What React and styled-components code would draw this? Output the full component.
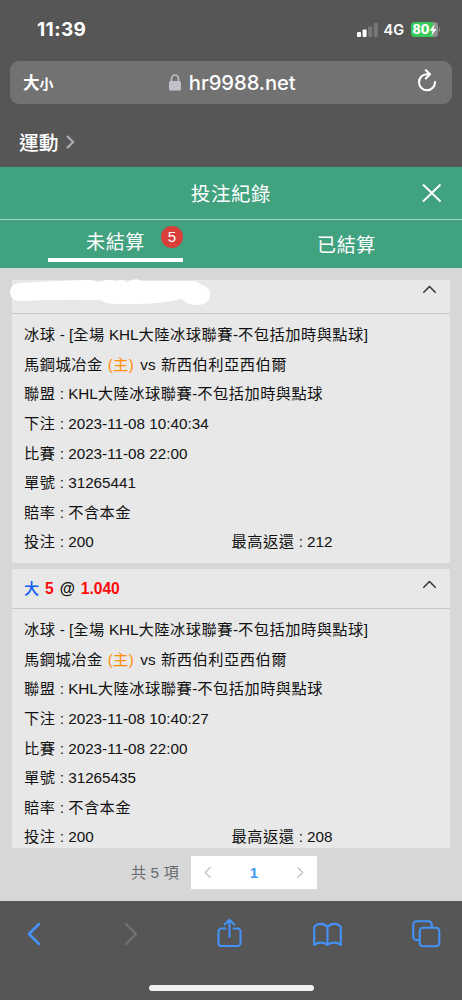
import React from "react";
import styled, { createGlobalStyle } from "styled-components";

const GlobalStyle = createGlobalStyle`
  * { box-sizing: border-box; }
  body { margin: 0; background: #565656; }
`;

const cjk = `"Noto Sans CJK TC", sans-serif`;

const Screen = styled.div`
  position: relative;
  display: flex;
  flex-direction: column;
  width: 462px;
  height: 1000px;
  overflow: hidden;
  background: #565656;
  color: #fff;
  font-family: "Liberation Sans", ${cjk};
`;

const StatusBar = styled.header`
  display: flex;
  align-items: center;
  justify-content: space-between;
  height: 61px;
  padding: 0 22px 2px 37px;
  font-family: Inter, ${cjk};
`;
const Clock = styled.span`
  font-size: 19px;
  font-weight: 700;
  letter-spacing: 0.4px;
`;
const StatusIcons = styled.div`
  display: flex;
  align-items: center;
`;
const Network = styled.span`
  margin: 0 6px 0 6px;
  width: 21px;
  font-size: 14.5px;
  font-weight: 600;
  letter-spacing: 0;
`;
const Battery = styled.div`
  display: flex;
  align-items: center;
  width: 27px;
  height: 15px;
  padding-left: 2px;
  border-radius: 4px;
  background: linear-gradient(90deg, #37c95a 80%, #929292 80%);
  font-size: 12.5px;
  font-weight: 800;
`;
const BatteryTip = styled.i`
  width: 1.5px;
  height: 5px;
  margin-left: 1px;
  border-radius: 0 2px 2px 0;
  background: #858585;
`;

const AddressBar = styled.div`
  display: grid;
  grid-template-columns: 90px 1fr 90px;
  align-items: center;
  height: 43px;
  margin: 0 10px;
  padding: 0 15.5px 0 13px;
  border-radius: 9px;
  background: #727272;
`;
const TextSize = styled.span`
  font: 600 16.5px/41px ${cjk};
  small { font-size: 14px; }
`;
const Address = styled.span`
  display: flex;
  align-items: center;
  justify-content: center;
  gap: 8px;
  padding-left: 5px;
  font: 500 20.2px/43px Inter, ${cjk};
  letter-spacing: -0.05px;
`;
const Reload = styled.span`
  display: flex;
  justify-content: flex-end;
  padding-bottom: 4px;
`;
const Crumb = styled.div`
  display: flex;
  align-items: center;
  gap: 7px;
  height: 63px;
  padding: 13px 0 0 19px;
  font: 500 19.8px/48px ${cjk};
`;

const TitleBar = styled.div`
  display: grid;
  grid-template-columns: 60px 1fr 60px;
  align-items: center;
  height: 53px;
  border-bottom: 1px solid #a9d3c4;
  background: #41a280;
`;
const Title = styled.h1`
  grid-column: 2;
  margin: 0;
  text-align: center;
  font: 400 19.5px/50px ${cjk};
  letter-spacing: 0.6px;
`;
const Close = styled.span`
  display: flex;
  justify-content: flex-end;
  padding-right: 20px;
`;
const Tabs = styled.nav`
  display: grid;
  grid-template-columns: 1fr 1fr;
  height: 48px;
  background: #41a280;
`;
const Tab = styled.div`
  position: relative;
  display: flex;
  justify-content: center;
  justify-self: center;
  width: 135px;
  height: ${(p) => (p.$active ? 42 : 48)}px;
  border-bottom: ${(p) => (p.$active ? "4px solid #fff" : "0")};
  font: 400 19px/${(p) => (p.$active ? 41 : 48)}px ${cjk};
  letter-spacing: 0.6px;
`;
const Badge = styled.b`
  position: absolute;
  top: 6px;
  right: 0;
  width: 22px;
  height: 22px;
  border-radius: 50%;
  background: #d93e38;
  font: 400 15px/22px "Liberation Sans", sans-serif;
  letter-spacing: 0;
  text-align: center;
`;

const Content = styled.main`
  display: flex;
  flex-direction: column;
  height: 633px;
  padding: 12px 12px 0;
  background: #d7d7d7;
`;
const List = styled.div`
  height: 567.5px;
  overflow: hidden;
`;
const Card = styled.section`
  height: 289px;
  margin-bottom: 6px;
  background: #e8e8e8;
  color: #111;
  &:first-child { margin-top: -6.5px; }
`;
const CardHead = styled.div`
  display: flex;
  align-items: center;
  justify-content: space-between;
  height: 40px;
  padding: 0 13px 0 12px;
  border-bottom: 1px solid #c9c9c9;
  font-size: 15.6px;
  font-weight: 700;
  svg { margin-bottom: 7px; }
`;
const Pick = styled.span`
  display: flex;
  align-items: baseline;
  gap: 5.9px;
  padding-bottom: 2px;
  font-size: 15.6px;
  em { color: #ff0a0a; font-style: normal; }
  i { color: #0a5ff0; font: 500 15.2px/30px ${cjk}; }
`;
const Details = styled.div`
  padding: 6.8px 12px 0;
`;
const Row = styled.div`
  display: grid;
  grid-template-columns: ${(p) => (p.$split ? "207.5px 1fr" : "1fr")};
  height: 29.57px;
  font-size: 15.25px;
  line-height: 29.57px;
  white-space: pre;
`;
const Han = styled.span`
  letter-spacing: 0.47px;
`;
const Home = styled.span`
  margin: 0 2px 0 1px;
  color: #ff8c0a;
`;
const Versus = styled.span`
  margin-right: 1px;
  letter-spacing: 0.15px;
`;

const Pager = styled.div`
  display: flex;
  align-items: center;
  height: 49px;
  padding-left: 119px;
  color: #66686c;
  font-size: 15.2px;
`;
const Total = styled.span`
  width: 60px;
  padding-bottom: 3px;
  white-space: nowrap;
  letter-spacing: 0.1px;
`;
const Pages = styled.div`
  display: grid;
  grid-template-columns: repeat(3, 1fr);
  align-items: center;
  justify-items: center;
  width: 126px;
  height: 33px;
  background: #fff;
  color: #3d98fa;
  font-size: 15px;
  font-weight: 700;
  svg:first-child { margin-right: 9px; }
  svg:last-child { margin-left: 8px; }
`;

const Toolbar = styled.footer`
  display: flex;
  align-items: flex-start;
  justify-content: space-between;
  height: 99px;
  padding: 16px 21px 0 20px;
  color: #4591f8;
`;
const HomeIndicator = styled.div`
  position: absolute;
  bottom: 9px;
  left: 149px;
  width: 165px;
  height: 6px;
  border-radius: 3px;
  background: #f1f1f1;
`;
const Scribble = styled.svg`
  position: absolute;
  top: 278px;
  left: 8px;
`;

/* Han characters are set slightly wider than Latin ones. */
const Mixed = ({ children }) =>
  children
    .split(/([\u3400-\u9fff]+)/)
    .map((part, i) => (i % 2 ? <Han key={i}>{part}</Han> : part));

const Stroke = ({ w, h, d, color = "currentColor", width = 2, cap = "round" }) => (
  <svg width={w} height={h} viewBox={`0 0 ${w} ${h}`} fill="none" stroke={color}
    strokeWidth={width} strokeLinecap={cap} strokeLinejoin="round">
    <path d={d} />
  </svg>
);

const Bet = ({ pick, time, id, payout }) => (
  <Card>
    <CardHead>
      <Pick>{pick}</Pick>
      <Stroke w={15} h={9} d="M1.3 7.8 7.5 1.5 13.7 7.8" color="#333" width={1.5} cap="butt" />
    </CardHead>
    <Details>
      <Row><span><Mixed>冰球 - [全場 KHL大陸冰球聯賽-不包括加時與點球]</Mixed></span></Row>
      <Row>
        <span>
          <Mixed>馬鋼城冶金 </Mixed>
          <Home><Mixed>(主)</Mixed></Home>
          <Versus> vs </Versus>
          <Mixed>新西伯利亞西伯爾</Mixed>
        </span>
      </Row>
      <Row><span><Mixed>聯盟 : KHL大陸冰球聯賽-不包括加時與點球</Mixed></span></Row>
      <Row><span><Mixed>{`下注 : ${time}`}</Mixed></span></Row>
      <Row><span><Mixed>比賽 : 2023-11-08 22:00</Mixed></span></Row>
      <Row><span><Mixed>{`單號 : ${id}`}</Mixed></span></Row>
      <Row><span><Mixed>賠率 : 不含本金</Mixed></span></Row>
      <Row $split>
        <span><Mixed>投注 : 200</Mixed></span>
        <span><Mixed>{`最高返還 : ${payout}`}</Mixed></span>
      </Row>
    </Details>
  </Card>
);

export default function App() {
  return (
    <Screen>
      <GlobalStyle />
      <StatusBar>
        <Clock>11:39</Clock>
        <StatusIcons>
          <svg width="21" height="14" viewBox="0 0 21 14">
            <rect x="0" y="9" width="4" height="5" rx="1" fill="#fff" />
            <rect x="5.6" y="6.5" width="4" height="7.5" rx="1" fill="#fff" />
            <rect x="11.2" y="3.5" width="4" height="10.5" rx="1" fill="#777" />
            <rect x="16.8" y="0" width="4" height="14" rx="1" fill="#777" />
          </svg>
          <Network>4G</Network>
          <Battery>
            80
            <svg width="8" height="12" viewBox="0 0 8 12"><path d="M5.6 0 .6 6.8h3L2.3 12l5.2-7H4.6z" fill="#fff" /></svg>
          </Battery>
          <BatteryTip />
        </StatusIcons>
      </StatusBar>
      <AddressBar>
        <TextSize>大<small>小</small></TextSize>
        <Address>
          <svg width="12" height="17" viewBox="0 0 12 17">
            <path d="M2.5 8V4.5a3.5 3.5 0 0 1 7 0V8" fill="none" stroke="#c2c0ca" strokeWidth="1.6" />
            <rect x="0" y="7" width="12" height="9.5" rx="1.6" fill="#c2c0ca" />
          </svg>
          hr9988.net
        </Address>
        <Reload>
          <Stroke w={20} h={23} d="M10 5.2A8 8 0 1 0 18 13M8.8 1.3 13 5.3 8.8 9.5" width={2.1} />
        </Reload>
      </AddressBar>
      <Crumb>
        運動
        <Stroke w={9} h={14} d="M1.7 1.7 7.2 7 1.7 12.3" color="#aaa8b1" width={2.4} />
      </Crumb>
      <TitleBar>
        <Title>投注紀錄</Title>
        <Close><Stroke w={21} h={20} d="M2 1.5 19.5 18.5M19.5 1.5 2 18.5" width={1.9} cap="butt" /></Close>
      </TitleBar>
      <Tabs>
        <Tab $active>未結算<Badge>5</Badge></Tab>
        <Tab>已結算</Tab>
      </Tabs>
      <Content>
        <List>
          <Bet time="2023-11-08 10:40:34" id="31265441" payout="212" />
          <Bet
            pick={<><i>大</i><em>5</em><span>@</span><em>1.040</em></>}
            time="2023-11-08 10:40:27" id="31265435" payout="208"
          />
        </List>
        <Pager>
          <Total>共 5 項</Total>
          <Pages>
            <Stroke w={7} h={11} d="M6 .8 1.2 5.5 6 10.2" color="#c0c4cc" width={1.4} />
            <span>1</span>
            <Stroke w={7} h={11} d="M1 .8 5.8 5.5 1 10.2" color="#c0c4cc" width={1.4} />
          </Pages>
        </Pager>
      </Content>
      <Toolbar>
        <Stroke w={28} h={34} d="M19 7 9 17 19 27" width={2.6} />
        <Stroke w={28} h={34} d="M9 7 19 17 9 27" color="#727272" width={2.3} />
        <Stroke w={30} h={34} d="M11.5 11.5H7.5a3 3 0 0 0-3 3V26a3 3 0 0 0 3 3H23.5a3 3 0 0 0 3-3V14.5a3 3 0 0 0-3-3H19.5M15.5 20V3M10.7 7.5 15.500 2.700 20.300 7.500" width={2.1} />
        <Stroke w={30} h={34} d="M15.5 10C12.5 5.8 5 5.8 2.2 10V28C5 24.8 12.5 24.8 15.5 28C18.5 24.8 26 24.8 28.8 28V10C26 5.8 18.5 5.8 15.5 10V28" width={2.1} />
        <Stroke w={30} h={34} d="M8 23H5.5A3.3 3.3 0 0 1 2.2 19.7V7.5A3.3 3.3 0 0 1 5.5 4.2H17.5A3.3 3.3 0 0 1 20.8 7.5V9.5M12 10.7H25A3.3 3.3 0 0 1 28.3 14V26A3.3 3.3 0 0 1 25 29.3H12A3.3 3.3 0 0 1 8.7 26V14A3.3 3.3 0 0 1 12 10.7Z" width={2.1} />
      </Toolbar>
      <Scribble width="205" height="32" viewBox="0 0 205 32">
        <path fill="#fff" d="M12 5Q45 3 82 2L90 4 99 2Q103 1 107 3L115 2 119 4 124 2Q130 0 133 3H184Q190 3 193 7Q202 8 202 17Q202 27 188 27Q179 27 174 21Q150 26 130 26H107Q97 26 93 22Q50 21 13 23Q2 23 2 14Q2 6 12 5Z" />
      </Scribble>
      <HomeIndicator />
    </Screen>
  );
}
